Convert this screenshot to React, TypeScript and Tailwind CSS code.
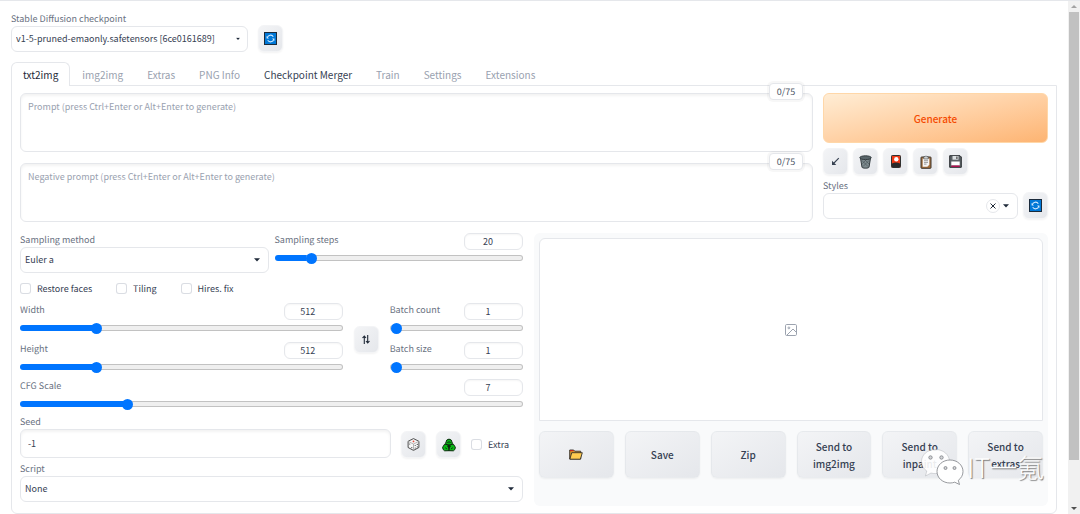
import React, { useState } from 'react';

const TABS = ['txt2img', 'img2img', 'Extras', 'PNG Info', 'Checkpoint Merger', 'Train', 'Settings', 'Extensions'];

const toolClass =
  'flex h-[27px] w-[25px] shrink-0 items-center justify-center rounded-md border border-gray-100 bg-gradient-to-br from-gray-100 to-gray-200 text-gray-700 shadow-xs';

const Caret: React.FC<{ small?: boolean }> = ({ small }) => (
  <svg
    viewBox="0 0 6 4"
    className={`pointer-events-none absolute top-1/2 -translate-y-1/2 fill-gray-800 ${small ? 'right-2 h-[3px] w-1' : 'right-[9px] h-1 w-[6px]'}`}
  >
    <path d="M0 .3h6L3 3.6z" />
  </svg>
);

interface DropdownProps {
  id: string;
  label: string;
  options: string[];
  smallCaret?: boolean;
}

const Dropdown: React.FC<DropdownProps> = ({ id, label, options, smallCaret }) => (
  <div className="min-w-0">
    <label htmlFor={id} className="block h-[14px] leading-[14px] text-gray-500">
      {label}
    </label>
    <div className="relative">
      <select
        id={id}
        className="block h-[26px] w-full appearance-none rounded-md border border-gray-200 bg-white pr-5 pl-1 text-gray-700 outline-none"
      >
        {options.map((o) => (
          <option key={o}>{o}</option>
        ))}
      </select>
      <Caret small={smallCaret} />
    </div>
  </div>
);

interface SliderProps {
  id: string;
  label: string;
  min: number;
  max: number;
  initial: number;
}

const Slider: React.FC<SliderProps> = ({ id, label, min, max, initial }) => {
  const [value, setValue] = useState(initial);
  const fill = ((value - min) / (max - min)) * 100;

  return (
    <div className="min-w-0">
      <div className="flex h-[17px] items-start justify-between">
        <label htmlFor={id} className="leading-[14px] text-gray-500">
          {label}
        </label>
        <input
          type="number"
          aria-label={`${label} value`}
          value={value}
          onChange={(e) => setValue(Number(e.target.value))}
          className="h-[17px] w-[59px] appearance-none rounded-md border border-gray-200 bg-white pr-[11px] text-center text-gray-700 shadow-[inset_0_1px_2px_rgba(0,0,0,0.04)] outline-none [&::-webkit-inner-spin-button]:appearance-none"
        />
      </div>
      <input
        id={id}
        type="range"
        min={min}
        max={max}
        value={value}
        onChange={(e) => setValue(Number(e.target.value))}
        style={{ backgroundSize: `${fill}% 100%, 100% 100%, 100% 100%` }}
        className="mt-[5px] block h-[6px] w-full appearance-none rounded-full border border-transparent [background:linear-gradient(#0075ff,#0075ff)_0_0/50%_100%_no-repeat_border-box,linear-gradient(#efefef,#efefef)_padding-box,linear-gradient(#c2c2c2,#c2c2c2)_border-box] [&::-webkit-slider-thumb]:h-[11px] [&::-webkit-slider-thumb]:w-[11px] [&::-webkit-slider-thumb]:appearance-none [&::-webkit-slider-thumb]:rounded-full [&::-webkit-slider-thumb]:bg-[#0075ff]"
      />
    </div>
  );
};

const Check: React.FC<{ label: string }> = ({ label }) => (
  <label className="flex h-[11px] items-center gap-[6px] text-gray-700">
    <input type="checkbox" className="h-[11px] w-[11px] appearance-none rounded-[3px] border border-gray-300/80 bg-white checked:bg-blue-600" />
    {label}
  </label>
);

const Prompt: React.FC<{ placeholder: string }> = ({ placeholder }) => (
  <div className="relative">
    <textarea
      aria-label={placeholder}
      placeholder={placeholder}
      className="block h-[59px] w-full resize-none rounded-md border border-gray-200 bg-white px-[7px] py-[6px] leading-[14px] shadow-[inset_0_2px_3px_rgba(0,0,0,0.05)] outline-none placeholder:text-gray-400"
    />
    <span className="absolute -top-[10px] right-[10px] flex h-[17px] w-[34px] items-center justify-center rounded-sm border border-gray-200 bg-white text-gray-600 shadow-[0_0_0_2px_rgba(0,0,0,0.03)]">
      0/75
    </span>
  </div>
);

const RefreshIcon = () => (
  <svg viewBox="0 0 13 13" className="h-[13px] w-[13px]" fill="none">
    <rect x=".5" y=".5" width="12" height="12" fill="#0078d7" stroke="#1b2b3c" />
    <path d="M3.300 5.700A3.300 3.300 0 0 1 9.300 4.700M9.700 7.300A3.300 3.300 0 0 1 3.700 8.300" stroke="#d6ecff" strokeWidth="1.100" />
    <path d="M2.600 4v2.400h2.300zM10.400 9V6.600H8.100z" fill="#d6ecff" />
  </svg>
);

const ArrowIcon = () => (
  <svg viewBox="0 0 9 9" className="h-[9px] w-[9px]" fill="none" stroke="#374151">
    <path d="M7.800 1.200 2 7" strokeWidth="1.100" />
    <path d="M1 8V3.700L5.300 8z" fill="#374151" stroke="none" />
  </svg>
);

const TrashIcon = () => (
  <svg viewBox="0 0 13 14" className="h-[14px] w-[13px]" fill="none">
    <path d="M1.500 3.200 3 12.200c.3 1.300 6.700 1.300 7 0l1.500-9z" fill="#7d8a8e" stroke="#343c40" />
    <ellipse cx="6.500" cy="2.700" rx="5.700" ry="1.900" fill="#59656a" stroke="#343c40" />
    <path d="m3 5.500 6 6M6 5l4 4M10 5.500l-6 6M7 5 3.300 8.700" stroke="#465155" strokeWidth=".6" />
  </svg>
);

const CardIcon = () => (
  <svg viewBox="0 0 10 13" className="h-[13px] w-[10px]">
    <rect x=".5" y=".5" width="9" height="12" rx=".8" fill="#f03a17" stroke="#30302f" />
    <path d="M1 8.500q4-1.800 8 0V12H1z" fill="#292929" />
    <circle cx="5.300" cy="4.300" r="2.200" fill="#fff" />
  </svg>
);

const ClipboardIcon = () => (
  <svg viewBox="0 0 12 14" className="h-[14px] w-3">
    <rect x="1" y="2" width="10" height="11.300" rx=".6" fill="#a36f3d" stroke="#3d352d" />
    <path d="M2.700 3.600h6.600v6.200l-2 2H2.700z" fill="#f5f5f5" />
    <path d="M3.800 1.500h1.300a1 1 0 0 1 1.800 0h1.300V4H3.800z" fill="#ccd1d3" stroke="#474a4c" strokeWidth=".6" />
    <path d="M4 5.700h4M4 7.400h4M4 9.100h2.500" stroke="#777" strokeWidth=".7" />
  </svg>
);

const FloppyIcon = () => (
  <svg viewBox="0 0 13 13" className="h-[13px] w-[13px]">
    <path d="M.7.700h10.300l1.300 1.300v10.300H.7z" fill="#5c6266" stroke="#292d30" />
    <path d="M3.500 1h6v3.700h-6z" fill="#dce0e2" />
    <path d="M7.300 1.500h1.200v2.500H7.300z" fill="#444" />
    <path d="M2.300 6.500h8.400v4H2.300z" fill="#fff" />
    <path d="M2.300 10.500h8.400V12H2.300z" fill="#b0104f" />
  </svg>
);

const DiceIcon = () => (
  <svg viewBox="0 0 13 13" className="h-[13px] w-[13px]" stroke="#3a3a3a" strokeWidth=".9" strokeLinejoin="round">
    <path d="m6.500.6 5.400 2.700v6.200l-5.400 2.900-5.400-2.900V3.300z" fill="#f6f6f6" />
    <path d="m1.100 3.300 5.400 2.800 5.400-2.800M6.500 6.100v6.300" fill="none" stroke="#999" strokeWidth=".7" />
    <circle cx="6.500" cy="3.400" r=".9" fill="#e04b3a" stroke="none" />
    <g fill="#444" stroke="none">
      <circle cx="2.700" cy="6" r=".6" />
      <circle cx="4.800" cy="9.600" r=".6" />
      <circle cx="8.200" cy="7.500" r=".6" />
      <circle cx="10.300" cy="6.400" r=".6" />
      <circle cx="8.200" cy="10" r=".6" />
      <circle cx="10.300" cy="8.800" r=".6" />
    </g>
  </svg>
);

const RecycleIcon = () => (
  <svg viewBox="0 0 14 14" className="h-[14px] w-[14px]" fill="#08b814" stroke="#0b2a0d" strokeLinejoin="round">
    <path d="M3.500 5.500 4.800 2Q7 .2 9.200 2l1.300 3.500L7 8z" />
    <path d="M2.600 6.200 6 6.800l1 5.900-4.400.1Q.4 11.700.7 9.200z" />
    <path d="M11.400 6.200 8 6.800l-1 5.900 4.400.1q2.200-1.100 1.900-3.600z" />
    <path d="m5.300 4.600 1.700-.8 1.700.8M3.300 9.800l1.500 1M10.700 9.800l-1.500 1" fill="none" />
    <path d="M7 5.300 8.900 9H5.100z" fill="#0b2a0d" stroke="none" />
  </svg>
);

const FolderIcon = () => (
  <svg viewBox="0 0 14 11" className="h-[11px] w-[14px]" strokeLinejoin="round">
    <path d="M.7 10V1h4l1 1.200h6V10z" fill="#e0992b" stroke="#33302b" strokeWidth=".9" />
    <path d="M1 1h3.500v1.200H1z" fill="#c3271b" />
    <path d="M.9 10.200 2.700 3.700h10.600l-1.900 6.500z" fill="#ffcb50" stroke="#33302b" strokeWidth=".9" />
  </svg>
);

const ImageIcon = () => (
  <svg viewBox="0 0 12 12" className="h-3 w-3" fill="none" stroke="#9ca3af">
    <rect x=".5" y=".5" width="11" height="11" rx="1.200" />
    <circle cx="3.900" cy="3.900" r=".9" />
    <path d="m2 11 6-6 3.500 3.500" />
  </svg>
);

const Watermark = () => (
  <div className="pointer-events-none absolute right-[4px] bottom-[20px] flex items-center gap-[3px]">
    <svg viewBox="0 0 44 38" className="h-[38px] w-[44px]" stroke="#7d8085" strokeWidth=".8">
      <path
        d="M15.500 1.500C7.500 1.500 1.500 6.800 1.500 13.500c0 4 2 7.300 5.300 9.500L5.500 28l5.500-3c1.500.4 3 .6 4.500.6 8 0 14-5.300 14-12s-6-12.100-14-12.100z"
        fill="#fff"
        fillOpacity=".9"
        strokeOpacity=".35"
      />
      <circle cx="10.500" cy="9.500" r="1.700" fill="#d3d5d8" />
      <circle cx="21.500" cy="9.500" r="1.700" fill="#d3d5d8" />
      <path
        d="M30 12c-7.200 0-13 5-13 11.500S22.800 35 30 35c1.700 0 3.300-.3 4.700-.8l4.800 2.300-1.200-4.200c2.900-2.100 4.700-5.200 4.700-8.800C43 17 37.200 12 30 12z"
        fill="#fff"
      />
      <circle cx="25.500" cy="20" r="1.500" fill="#d3d5d8" />
      <circle cx="34.500" cy="20" r="1.500" fill="#d3d5d8" />
    </svg>
    <span className="text-[27px] leading-[30px] font-light whitespace-nowrap text-white [text-shadow:1px_1px_1px_#777]">IT一氪</span>
  </div>
);

const Scrollbar = () => (
  <div className="flex w-3 shrink-0 flex-col items-center justify-between bg-[#f1f1f1]">
    <svg viewBox="0 0 12 11" className="h-[11px] w-3 shrink-0 fill-[#a3a3a3]">
      <path d="M3 7h6L6 4z" />
    </svg>
    <div className="w-[10px] flex-[449] bg-[#c1c1c1]" />
    <div className="flex-[43]" />
    <svg viewBox="0 0 12 11" className="h-[11px] w-3 shrink-0 fill-[#505050]">
      <path d="M3 4h6L6 7z" />
    </svg>
  </div>
);

export default function App() {
  const [tab, setTab] = useState('txt2img');

  return (
    <div className="flex min-h-screen border-t border-gray-200 bg-white font-['Noto_Sans_CJK_SC',sans-serif] text-[9px] text-gray-700 [text-rendering:geometricPrecision]">
      <main className="min-w-0 flex-1 pr-[11px] pl-[11px]">
        <header className="flex items-end gap-[10px] pt-[11px]">
          <div className="w-[237px]">
            <Dropdown id="checkpoint" label="Stable Diffusion checkpoint" options={['v1-5-pruned-emaonly.safetensors [6ce0161689]']} smallCaret />
          </div>
          <button type="button" aria-label="Refresh checkpoints" className={toolClass}>
            <RefreshIcon />
          </button>
        </header>

        <nav className="mt-[10px] flex h-[23px] items-stretch">
          {TABS.map((name) => (
            <button
              key={name}
              type="button"
              onClick={() => setTab(name)}
              className={`relative rounded-t-md border border-b-0 px-[11px] text-[10px] ${
                name === tab
                  ? 'z-10 -mb-px border-gray-200 bg-white text-gray-800'
                  : name === 'Checkpoint Merger'
                    ? 'border-transparent text-gray-700'
                    : 'border-transparent text-gray-400'
              }`}
            >
              {name}
            </button>
          ))}
        </nav>

        <section className="rounded-b-md border border-gray-200 px-2 pt-[7px] pb-[7px]">
          <div className="flex gap-[10px]">
            <div className="flex min-w-0 flex-1 flex-col gap-[11px]">
              <Prompt placeholder="Prompt (press Ctrl+Enter or Alt+Enter to generate)" />
              <Prompt placeholder="Negative prompt (press Ctrl+Enter or Alt+Enter to generate)" />
            </div>
            <div className="w-[225px] shrink-0">
              <button
                type="button"
                className="block h-[50px] w-full rounded-md border border-orange-200 bg-gradient-to-br from-[#ffedd5] to-[#fdb472] text-[10px] font-medium text-orange-600"
              >
                Generate
              </button>
              <div className="mt-[5px] flex gap-[5px]">
                <button type="button" aria-label="Read generation parameters" className={toolClass}>
                  <ArrowIcon />
                </button>
                <button type="button" aria-label="Clear prompt" className={toolClass}>
                  <TrashIcon />
                </button>
                <button type="button" aria-label="Extra networks" className={toolClass}>
                  <CardIcon />
                </button>
                <button type="button" aria-label="Apply style" className={toolClass}>
                  <ClipboardIcon />
                </button>
                <button type="button" aria-label="Save style" className={toolClass}>
                  <FloppyIcon />
                </button>
              </div>
              <div className="mt-[4px] flex items-end gap-[5px]">
                <div className="relative flex-1">
                  <Dropdown id="styles" label="Styles" options={['']} />
                  <button
                    type="button"
                    aria-label="Clear styles"
                    className="absolute right-[18px] bottom-[6px] flex h-[14px] w-[14px] items-center justify-center rounded-full border border-gray-200 bg-white"
                  >
                    <svg viewBox="0 0 6 6" className="h-[6px] w-[6px]" stroke="#1f2937" strokeWidth="1">
                      <path d="m.5.5 5 5m0-5-5 5" />
                    </svg>
                  </button>
                </div>
                <button type="button" aria-label="Refresh styles" className={toolClass}>
                  <RefreshIcon />
                </button>
              </div>
            </div>
          </div>

          <div className="mt-[11px] flex gap-[11px]">
            <div className="min-w-0 flex-[503] pb-1">
              <div className="grid grid-cols-2 gap-[6px]">
                <Dropdown id="sampler" label="Sampling method" options={['Euler a']} />
                <Slider id="steps" label="Sampling steps" min={1} max={150} initial={20} />
              </div>

              <div className="mt-[10px] flex gap-6">
                <Check label="Restore faces" />
                <Check label="Tiling" />
                <Check label="Hires. fix" />
              </div>

              <div className="mt-[9px] flex items-end gap-[11px]">
                <div className="flex min-w-0 flex-[322] flex-col gap-[11px]">
                  <Slider id="width" label="Width" min={64} max={2048} initial={512} />
                  <Slider id="height" label="Height" min={64} max={2048} initial={512} />
                </div>
                <div className="pb-[17px]">
                  <button type="button" aria-label="Swap width and height" className={toolClass}>
                    <svg viewBox="0 0 8 9" className="h-[9px] w-2" fill="none" stroke="#1f2937" strokeWidth="1.100">
                      <path d="M2.300 9V1M.5 3l1.800-2L4 3M5.700 0v8M4 6l1.700 2L7.500 6" />
                    </svg>
                  </button>
                </div>
                <div className="flex min-w-0 flex-[133] flex-col gap-[11px]">
                  <Slider id="batch-count" label="Batch count" min={1} max={100} initial={1} />
                  <Slider id="batch-size" label="Batch size" min={1} max={8} initial={1} />
                </div>
              </div>

              <div className="mt-[9px]">
                <Slider id="cfg" label="CFG Scale" min={1} max={30} initial={7} />
              </div>

              <div className="mt-2 flex items-end gap-[10px]">
                <div className="min-w-0 flex-1">
                  <label htmlFor="seed" className="block h-[14px] leading-[14px] text-gray-500">
                    Seed
                  </label>
                  <input
                    id="seed"
                    defaultValue="-1"
                    className="block h-[29px] w-full rounded-md border border-gray-200 bg-white px-[7px] text-gray-700 shadow-[inset_0_2px_3px_rgba(0,0,0,0.05)] outline-none"
                  />
                </div>
                <button type="button" aria-label="Random seed" className={toolClass}>
                  <DiceIcon />
                </button>
                <button type="button" aria-label="Reuse seed" className={toolClass}>
                  <RecycleIcon />
                </button>
                <div className="flex h-[27px] w-[52px] items-center">
                  <Check label="Extra" />
                </div>
              </div>

              <div className="mt-[4px]">
                <Dropdown id="script" label="Script" options={['None']} />
              </div>
            </div>

            <div className="relative flex min-w-0 flex-[504] flex-col rounded-md bg-gray-50 px-[5px] pt-[5px] pb-7">
              <div className="flex flex-1 items-center justify-center rounded-t-md border border-gray-200 bg-white">
                <ImageIcon />
              </div>
              <div className="mt-[10px] grid grid-cols-6 gap-[11px]">
                {['', 'Save', 'Zip', 'Send to img2img', 'Send to inpaint', 'Send to extras'].map((name) => (
                  <button
                    key={name}
                    type="button"
                    aria-label={name || 'Open folder'}
                    className="flex h-[47px] items-center justify-center rounded-md border border-gray-200/60 bg-gradient-to-br from-gray-100 to-gray-200 px-3 text-[10px] leading-[17px] font-medium text-gray-700 shadow-xs"
                  >
                    {name || <FolderIcon />}
                  </button>
                ))}
              </div>
              <Watermark />
            </div>
          </div>
        </section>
      </main>
      <Scrollbar />
    </div>
  );
}
